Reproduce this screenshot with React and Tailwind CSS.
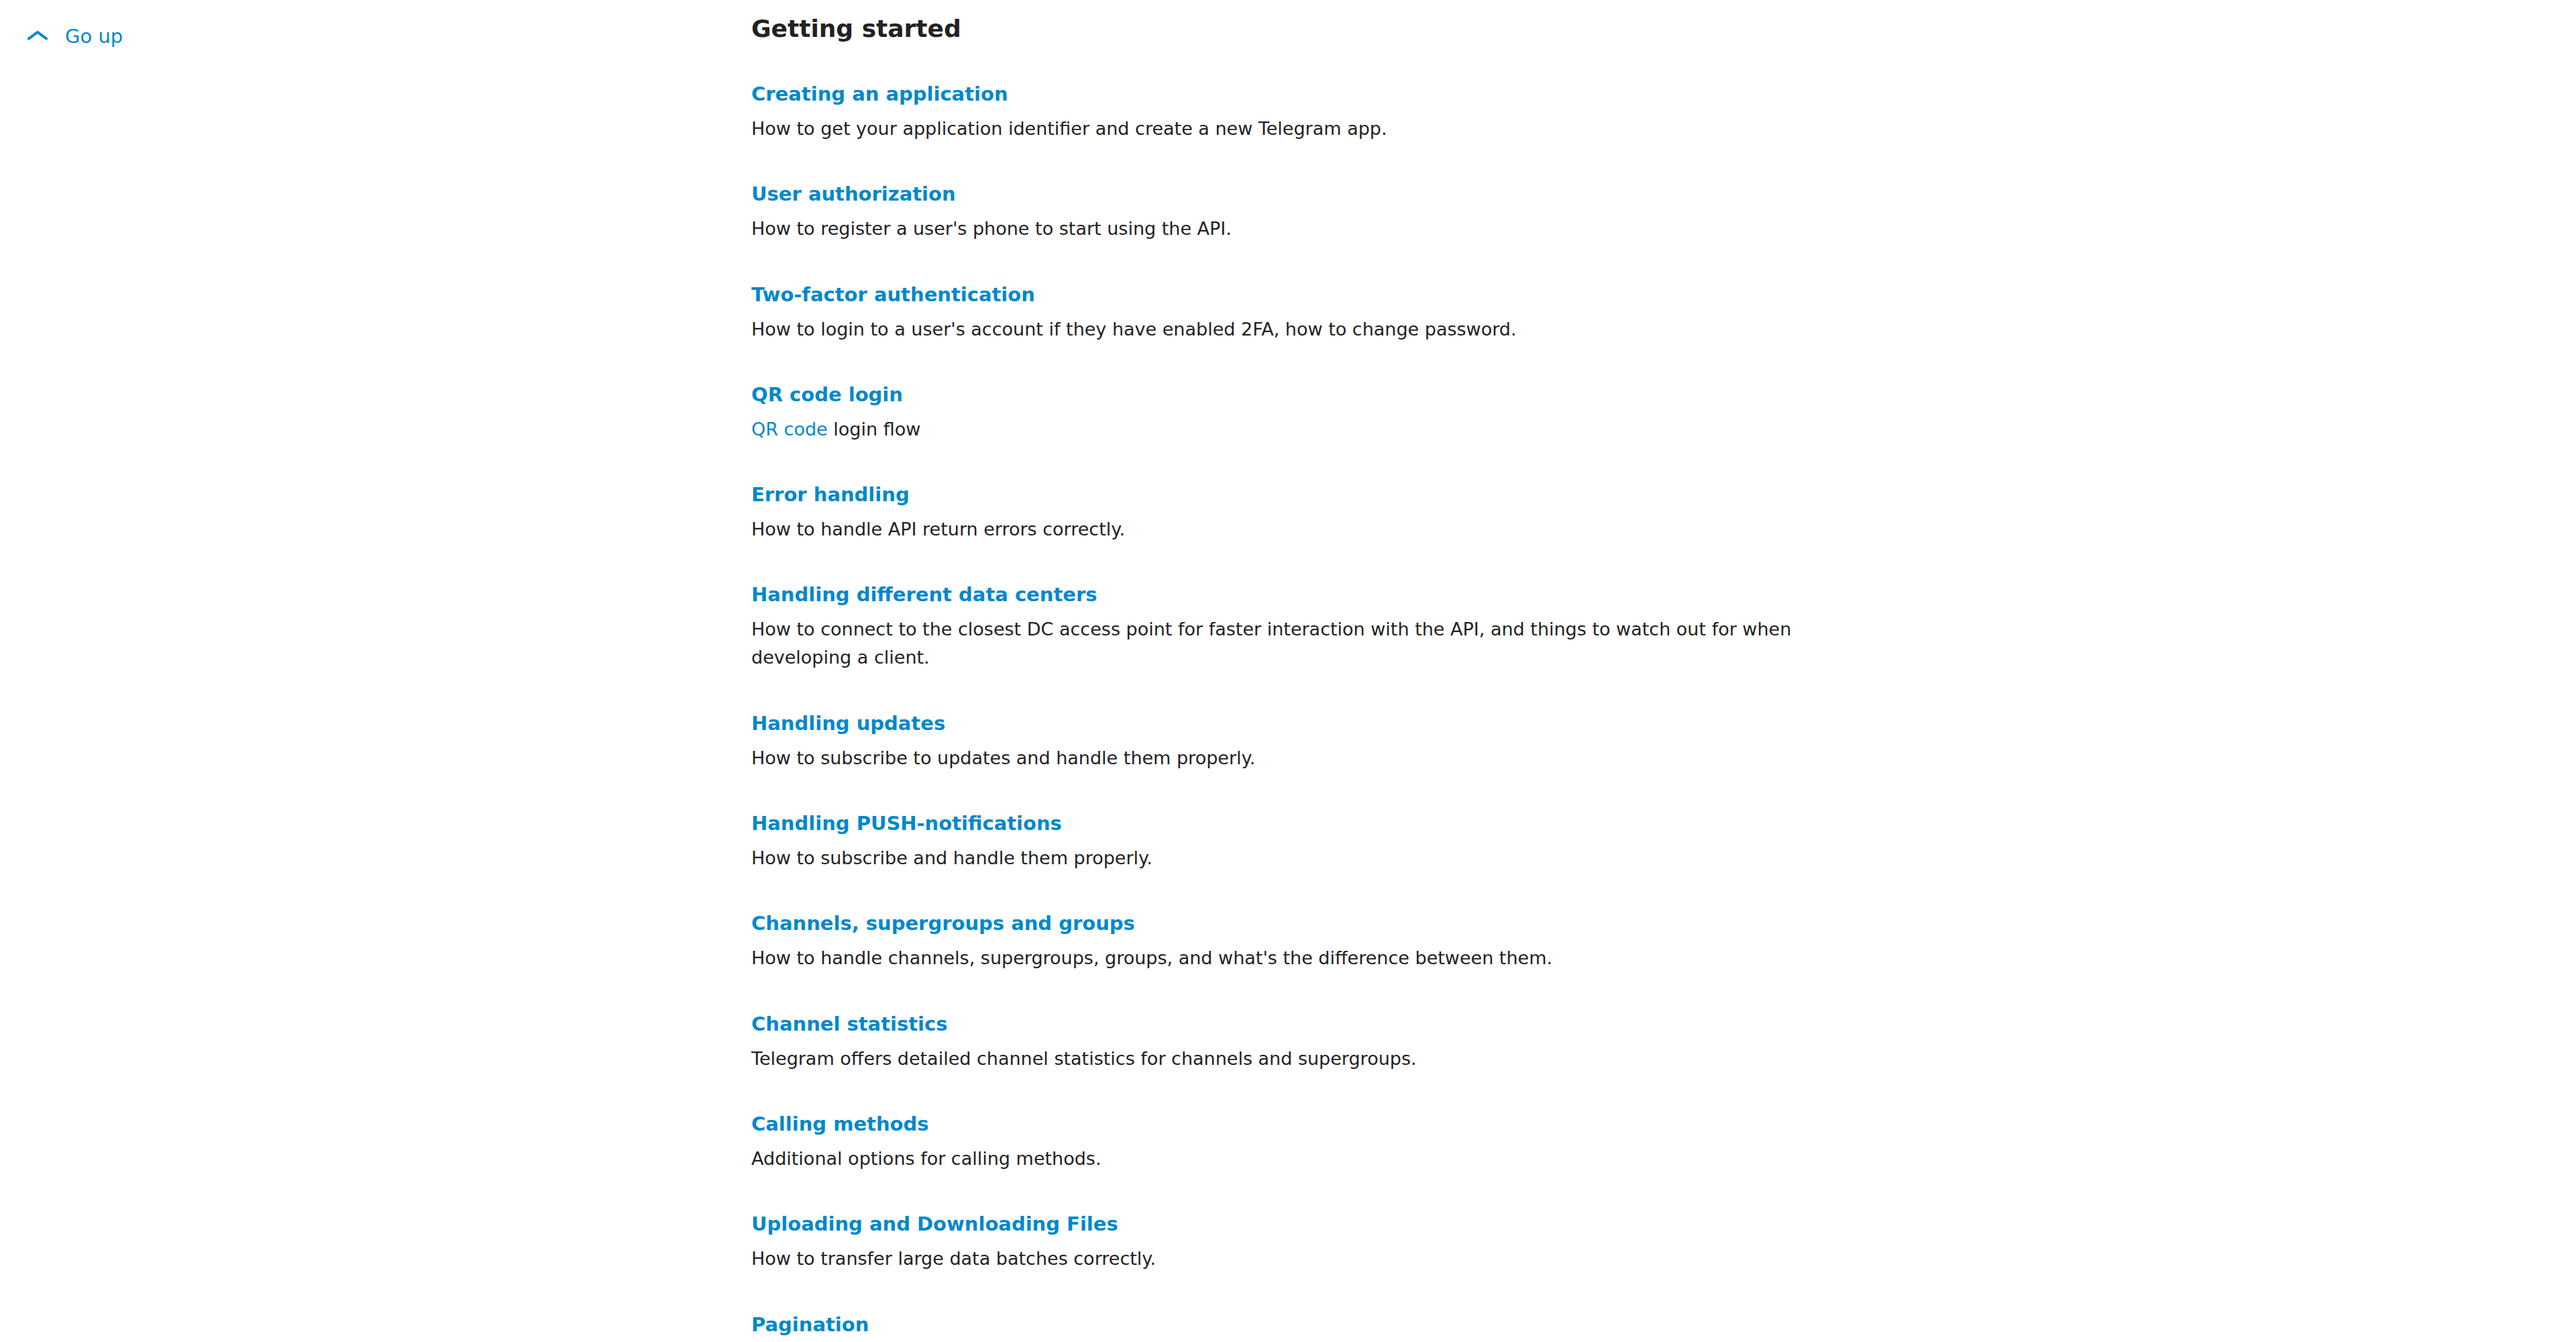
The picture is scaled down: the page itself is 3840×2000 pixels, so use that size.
const sections = [
  {
    title: 'Creating an application',
    text: 'How to get your application identifier and create a new Telegram app.',
  },
  {
    title: 'User authorization',
    text: "How to register a user's phone to start using the API.",
  },
  {
    title: 'Two-factor authentication',
    text: "How to login to a user's account if they have enabled 2FA, how to change password.",
  },
  {
    title: 'QR code login',
    link: 'QR code',
    text: ' login flow',
  },
  {
    title: 'Error handling',
    text: 'How to handle API return errors correctly.',
  },
  {
    title: 'Handling different data centers',
    text: 'How to connect to the closest DC access point for faster interaction with the API, and things to watch out for when developing a client.',
  },
  {
    title: 'Handling updates',
    text: 'How to subscribe to updates and handle them properly.',
  },
  {
    title: 'Handling PUSH-notifications',
    text: 'How to subscribe and handle them properly.',
  },
  {
    title: 'Channels, supergroups and groups',
    text: "How to handle channels, supergroups, groups, and what's the difference between them.",
  },
  {
    title: 'Channel statistics',
    text: 'Telegram offers detailed channel statistics for channels and supergroups.',
  },
  {
    title: 'Calling methods',
    text: 'Additional options for calling methods.',
  },
  {
    title: 'Uploading and Downloading Files',
    text: 'How to transfer large data batches correctly.',
  },
  {
    title: 'Pagination',
    text: 'How to fetch results from large lists of objects.',
  },
]

function GoUp() {
  return (
    <a href="#" className="flex items-center gap-[25px] text-[29px] leading-[42px] text-[#0088cc]">
      <svg width="32" height="14" viewBox="0 0 32 14" fill="none" className="mt-[-2px]">
        <path d="M1.5 12.5 L16 2 L30.5 12.5" stroke="#0088cc" strokeWidth="4" />
      </svg>
      <span>Go up</span>
    </a>
  )
}

function Section({ section }) {
  return (
    <div className="mb-[55.3px]">
      <a href="#" className="block text-[29px] leading-[42px] font-bold text-[#0088cc]">
        {section.title}
      </a>
      <p className="mt-[10px] text-[27px] leading-[42px] text-[#222222]">
        {section.link && <a href="#" className="text-[#0088cc]">{section.link}</a>}
        {section.text}
      </p>
    </div>
  )
}

export default function App() {
  return (
    <div className="flex h-[2000px] overflow-hidden bg-white font-['DejaVu_Sans',sans-serif]">
      <aside className="w-[1120px] shrink-0 pt-[33px] pl-[40px]">
        <GoUp />
      </aside>
      <main className="w-[1600px] pt-[19px]">
        <h3 className="mb-[52px] text-[36px] leading-[48px] font-bold text-[#222222]">
          Getting started
        </h3>
        {sections.map((s) => (
          <Section key={s.title} section={s} />
        ))}
      </main>
    </div>
  )
}
